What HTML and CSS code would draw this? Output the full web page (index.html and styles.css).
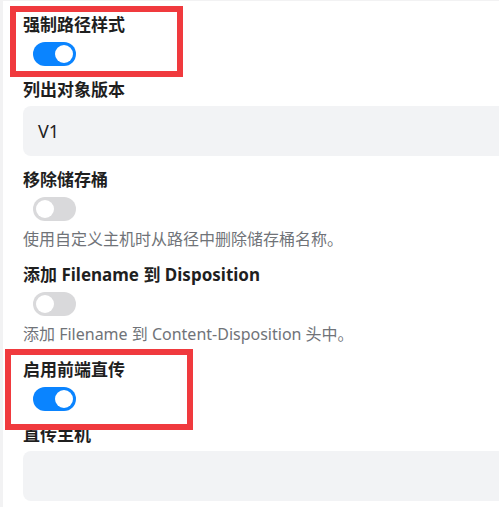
FILE: index.html
```html
<!DOCTYPE html>
<html lang="zh-CN">
<head>
<meta charset="utf-8">
<link rel="stylesheet" href="styles.css">
</head>
<body>
<div class="card">
  <div class="field">
    <div class="label">强制路径样式</div>
    <div class="toggle on"><span class="knob"></span></div>
  </div>
  <div class="field">
    <div class="label">列出对象版本</div>
    <div class="input">V1</div>
  </div>
  <div class="field">
    <div class="label">移除储存桶</div>
    <div class="toggle"><span class="knob"></span></div>
    <div class="desc">使用自定义主机时从路径中删除储存桶名称。</div>
  </div>
  <div class="field">
    <div class="label">添加 Filename 到 Disposition</div>
    <div class="toggle"><span class="knob"></span></div>
    <div class="desc">添加 Filename 到 Content-Disposition 头中。</div>
  </div>
  <div class="field">
    <div class="label">启用前端直传</div>
    <div class="toggle on"><span class="knob"></span></div>
  </div>
  <div class="field field-last">
    <div class="label">直传主机</div>
    <div class="input"></div>
  </div>
</div>
<div class="mark mark-1"></div>
<div class="mark mark-2"></div>
</body>
</html>
```
FILE: styles.css
```css
html, body {
  margin: 0;
  padding: 0;
}
body {
  background: #f2f2f3;
  width: 499px;
  height: 507px;
  overflow: hidden;
  position: relative;
  font-family: "Noto Sans", "Noto Sans CJK SC", sans-serif;
  color: #1f1f1f;
}
.card {
  margin: 1px 0 0 3px;
  background: #ffffff;
  width: 496px;
  height: 506px;
  padding: 12px 0 0 20px;
  box-sizing: border-box;
  display: flex;
  flex-direction: column;
  gap: 12px;
  overflow: hidden;
}
.field {
  display: flex;
  flex-direction: column;
  align-items: flex-start;
}
.label {
  font-size: 17px;
  line-height: 24px;
  font-weight: 700;
  color: #1f1f1f;
  white-space: nowrap;
}
.toggle {
  margin: 5px 0 0 10px;
  width: 43px;
  height: 24px;
  border-radius: 12px;
  background: #d9d9db;
  position: relative;
  flex: none;
}
.toggle.on {
  background: #0a84ff;
}
.knob {
  position: absolute;
  top: 3px;
  left: 3px;
  width: 18px;
  height: 18px;
  border-radius: 50%;
  background: #ffffff;
}
.toggle.on .knob {
  left: 22px;
}
.desc {
  margin-top: 6px;
  font-size: 16px;
  line-height: 24px;
  color: #707378;
  white-space: nowrap;
}
.input {
  margin-top: 4px;
  align-self: stretch;
  height: 50px;
  border-radius: 8px 0 0 8px;
  background: #f2f3f5;
  padding-left: 15px;
  font-size: 18px;
  line-height: 50px;
  color: #1f1f1f;
}
.mark {
  position: absolute;
  border: 6px solid #f03a3e;
  box-sizing: border-box;
}
.mark-1 {
  left: 10px;
  top: 6px;
  width: 173px;
  height: 71px;
}
.mark-2 {
  left: 5px;
  top: 349px;
  width: 188px;
  height: 81px;
}
```
